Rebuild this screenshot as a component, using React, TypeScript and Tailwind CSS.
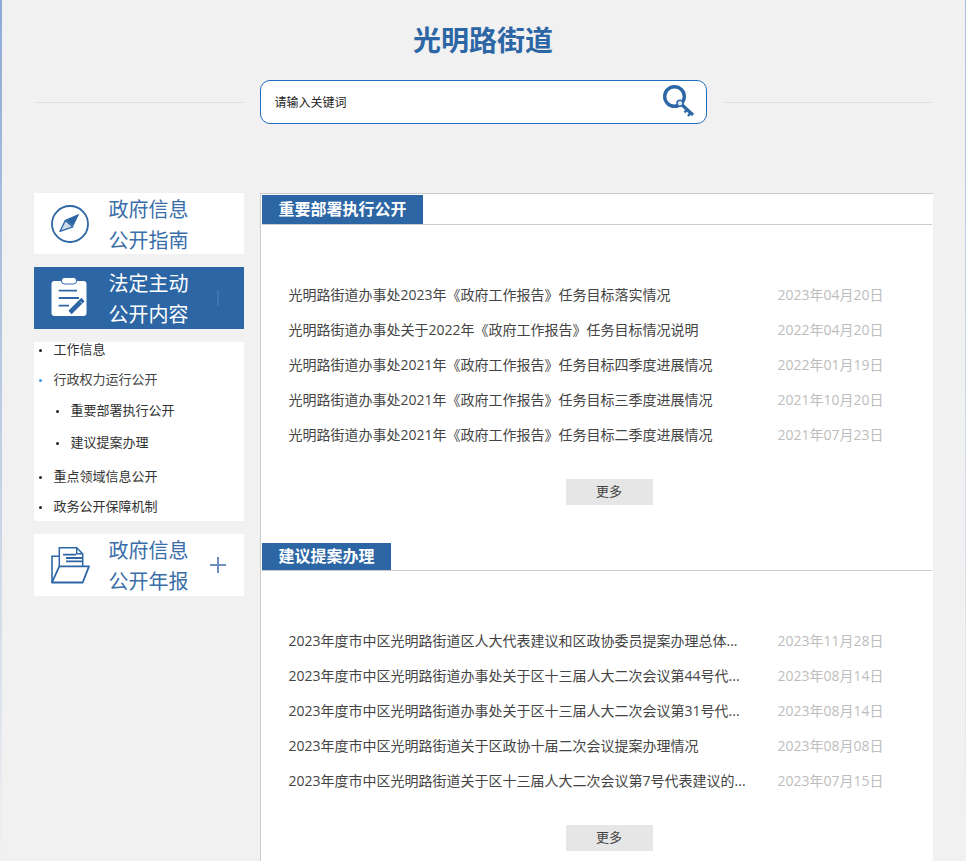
import React from "react";

const FONT = "font-['Open_Sans','Noto_Sans_CJK_SC','Noto_Sans_CJK_JP',sans-serif]";

const WORK = [
  { title: "光明路街道办事处2023年《政府工作报告》任务目标落实情况", date: "2023年04月20日" },
  { title: "光明路街道办事处关于2022年《政府工作报告》任务目标情况说明", date: "2022年04月20日" },
  { title: "光明路街道办事处2021年《政府工作报告》任务目标四季度进展情况", date: "2022年01月19日" },
  { title: "光明路街道办事处2021年《政府工作报告》任务目标三季度进展情况", date: "2021年10月20日" },
  { title: "光明路街道办事处2021年《政府工作报告》任务目标二季度进展情况", date: "2021年07月23日" },
];

const PROPOSALS = [
  { title: "2023年度市中区光明路街道区人大代表建议和区政协委员提案办理总体...", date: "2023年11月28日" },
  { title: "2023年度市中区光明路街道办事处关于区十三届人大二次会议第44号代...", date: "2023年08月14日" },
  { title: "2023年度市中区光明路街道办事处关于区十三届人大二次会议第31号代...", date: "2023年08月14日" },
  { title: "2023年度市中区光明路街道关于区政协十届二次会议提案办理情况", date: "2023年08月08日" },
  { title: "2023年度市中区光明路街道关于区十三届人大二次会议第7号代表建议的...", date: "2023年07月15日" },
];

function KeyIcon() {
  return (
    <svg width="34" height="34" viewBox="0 0 34 34" fill="none">
      <circle cx="13.5" cy="11.5" r="9.8" stroke="#2c66a5" strokeWidth="3.4" />
      <path d="M20 19l12 11" stroke="#2c66a5" strokeWidth="3.2" />
      <path d="M25.5 25l-2 2.5M29 28.5l-2 2.5" stroke="#2c66a5" strokeWidth="2.2" />
      <circle cx="19" cy="18.3" r="3" fill="#dbe7f3" stroke="#2c66a5" strokeWidth="1.6" />
    </svg>
  );
}

function CompassIcon() {
  return (
    <svg width="38" height="38" viewBox="0 0 38 38" fill="none">
      <circle cx="19" cy="19" r="18" stroke="#2c66a5" strokeWidth="1.8" />
      <path d="M28.3 8.7L22.3 21.3 14.3 14.7z" fill="#2c66a5" />
      <path d="M14.3 15.5L21.8 21.8 9 26.3z" fill="#cfdcec" stroke="#2c66a5" strokeWidth="1.4" strokeLinejoin="round" />
    </svg>
  );
}

function ClipboardIcon() {
  return (
    <svg width="36" height="42" viewBox="0 0 36 42" fill="none">
      <rect x="0.5" y="4" width="35" height="35" rx="3" fill="#fff" />
      <rect x="10.5" y="0.5" width="15" height="6.5" rx="3" fill="#fff" stroke="#2c66a5" strokeWidth="1" />
      <path d="M7.7 13.7H26M7.7 21H28M7.7 28.7H18" stroke="#2c66a5" strokeWidth="1.8" />
      <path d="M19 35.5L32 22.5" stroke="#2c66a5" strokeWidth="4.6" />
      <path d="M29.5 24.8l1.6 1.6" stroke="#fff" strokeWidth="0.8" />
    </svg>
  );
}

function FolderIcon() {
  return (
    <svg width="39" height="37" viewBox="0 0 39 37" fill="none" stroke="#2c66a5">
      <path d="M8.3 19.3V0.8H25.7L31.7 6.7V19.3" strokeWidth="1.5" />
      <path d="M25.7 0.8V6.7H31.7" strokeWidth="1.4" />
      <path d="M12 7.7H25M15 11H31.7M15 14.3H31.7" strokeWidth="1.8" />
      <path d="M1 35.5V9.3H8.3" strokeWidth="1.6" />
      <path d="M1 35.5L8.3 19.3H38L31.7 35.5z" strokeWidth="1.8" fill="#fff" strokeLinejoin="round" />
    </svg>
  );
}

function PlusIcon() {
  return (
    <svg width="16" height="16" viewBox="0 0 16 16" fill="none">
      <path d="M8 0v16M0 8h16" stroke="#6d8fc0" strokeWidth="2" />
    </svg>
  );
}

function SideCard({ icon, lines, active, plus, short }: { icon: React.ReactNode; lines: string[]; active?: boolean; plus?: boolean; short?: boolean }) {
  return (
    <div className={`flex items-center ${short ? "h-[61px]" : "h-[62px]"} ${active ? "bg-[#2c66a5] text-white" : "bg-white text-[#3a6ea8]"}`}>
      <div className="flex w-[75px] pl-[17px]">{icon}</div>
      <div className="w-[101px] pt-[2px] text-[20px] leading-[31px]">
        {lines.map((l) => (
          <div key={l}>{l}</div>
        ))}
      </div>
      {plus && <PlusIcon />}
      {active && <div className="ml-[7px] h-[16px] w-[2px] bg-[#3e75af]" />}
    </div>
  );
}

function SideLink({ label, sub, current, spacing }: { label: string; sub?: boolean; current?: boolean; spacing: string }) {
  return (
    <div className={`flex h-[16px] items-center text-[13px] ${spacing} ${sub ? "pl-[22px]" : "pl-[5px]"} ${current ? "text-[#444]" : "text-[#333]"}`}>
      <span className={`mr-[12px] h-[3px] w-[3px] rounded-full ${current ? "bg-[#3b9bf0]" : "bg-[#222]"}`} />
      {label}
    </div>
  );
}

function Section({ title, tabClass, items }: { title: string; tabClass: string; items: { title: string; date: string }[] }) {
  return (
    <section>
      <div className="mr-[1px] border-b border-[#ccc]">
        <h2 className={`flex items-center justify-center bg-[#2c66a5] pb-[2px] pl-[1px] text-[16px] font-bold text-white ${tabClass}`}>{title}</h2>
      </div>
      <ul className="pt-[52px]">
        {items.map((it) => (
          <li key={it.title} className="flex h-[35px] items-center pl-[27px]">
            <span className="w-[459px] whitespace-nowrap text-[14px] text-[#444]">{it.title}</span>
            <span className="ml-[30px] whitespace-nowrap text-[14px] text-[#bdbdbd]">{it.date}</span>
          </li>
        ))}
      </ul>
      <div className="flex justify-center pt-[27px] pl-[24px]">
        <button className="h-[26px] w-[87px] bg-[#e6e6e6] text-[13px] text-[#444]">更多</button>
      </div>
    </section>
  );
}

export default function App() {
  return (
    <div className={`flex h-[861px] overflow-hidden bg-[#f1f1f1] ${FONT}`}>
      <div className="w-[2px] bg-gradient-to-b from-[#8dabd5] to-[#f1f1f1]" />
      <div className="flex-1 pl-[32px] pr-[32px]">
        <h1 className="pt-[20px] text-center text-[28px] leading-[40px] font-bold text-[#2c66a5]">光明路街道</h1>

        <div className="mt-[20px] flex items-center">
          <div className="h-[1px] w-[210px] bg-[#e2e2e2]" />
          <div className="mx-[16px] flex h-[44px] w-[447px] items-center justify-between rounded-[10px] border border-[#1f6dbd] bg-white pr-[11px] pl-[14px]">
            <span className="pt-[2px] text-[12px] text-[#222]">请输入关键词</span>
            <KeyIcon />
          </div>
          <div className="h-[1px] w-[210px] bg-[#e2e2e2]" />
        </div>

        <div className="mt-[69px] flex gap-[16px]">
          <aside className="flex w-[210px] flex-col gap-[13px]">
            <SideCard icon={<CompassIcon />} lines={["政府信息", "公开指南"]} short />
            <SideCard icon={<ClipboardIcon />} lines={["法定主动", "公开内容"]} active />
            <div className="bg-white pb-[6px]">
              <SideLink label="工作信息" spacing="mb-[14px]" />
              <SideLink label="行政权力运行公开" current spacing="mb-[15px]" />
              <SideLink label="重要部署执行公开" sub spacing="mb-[16px]" />
              <SideLink label="建议提案办理" sub spacing="mb-[18px]" />
              <SideLink label="重点领域信息公开" spacing="mb-[14px]" />
              <SideLink label="政务公开保障机制" spacing="mb-0" />
            </div>
            <SideCard icon={<FolderIcon />} lines={["政府信息", "公开年报"]} plus />
          </aside>

          <main className="h-[700px] flex-1 border-t border-l border-[#ccc] bg-white pt-[1px] pl-[1px]">
            <Section title="重要部署执行公开" tabClass="h-[29px] w-[161px]" items={WORK} />
            <div className="h-[38px]" />
            <Section title="建议提案办理" tabClass="h-[27px] w-[129px]" items={PROPOSALS} />
          </main>
        </div>
      </div>
      <div className="w-[2px] bg-gradient-to-b from-[#a9c0de] to-[#f1f1f1]" />
    </div>
  );
}
